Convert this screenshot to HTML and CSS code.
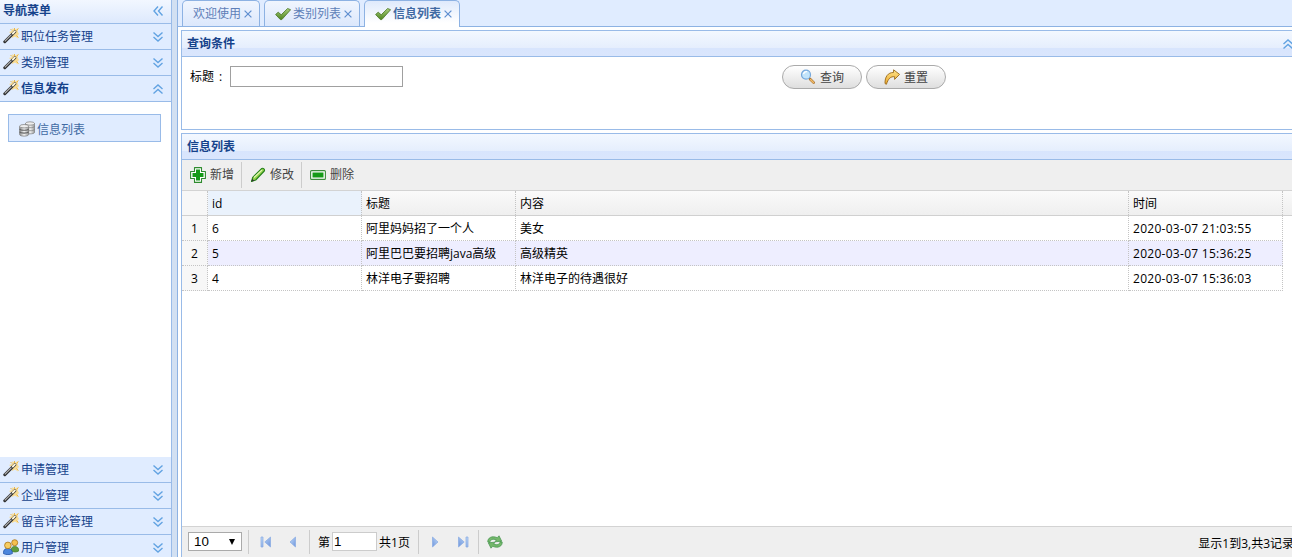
FILE: index.html
```html
<!DOCTYPE html>
<html lang="zh-CN">
<head>
  <meta charset="UTF-8">
  <title>信息列表</title>
  <link rel="stylesheet" href="styles.css">
</head>
<body>
  <!-- shared icons -->
  <svg class="sprite">
    <defs>
      <linearGradient id="g-check" x1="0" y1="0" x2="0" y2="1"><stop offset="0" stop-color="#a9cf7c"/><stop offset="1" stop-color="#4c8420"/></linearGradient>
      <linearGradient id="g-arrow" x1="0" y1="0" x2="0" y2="1"><stop offset="0" stop-color="#ffe58a"/><stop offset="1" stop-color="#eba72c"/></linearGradient>
      <linearGradient id="g-page" x1="0" y1="0" x2="1" y2="1"><stop offset="0" stop-color="#c3dcf8"/><stop offset="1" stop-color="#6d94dc"/></linearGradient>
      <linearGradient id="g-db" x1="0" y1="0" x2="1" y2="0"><stop offset="0" stop-color="#8a8a8a"/><stop offset=".5" stop-color="#f4f4f4"/><stop offset="1" stop-color="#9a9a9a"/></linearGradient>
    </defs>
    <symbol id="wand" viewBox="0 0 16 16">
      <path d="M9.500 0l2 1.800L15.200 0l-.5 3.500L16 6l-1.500 1.500.5 3-3-2L9 10 8.500 6 6 4l3-1z" fill="#f9dc93"/>
      <path d="M7.500 1l1.500 1.500M15.500.5l-2 2M15.500 9.500L13.500 7.500M11.500 0v2" stroke="#e8b850"/>
      <path d="M1.800 13.700L11.800 3.700" stroke="#2e2e2e" stroke-width="3" stroke-linecap="round"/>
      <path d="M1.800 13.300L8.500 6.600" stroke="#b5b5b5" stroke-width="1.200"/>
      <path d="M9.800 5.500l2.100-2.100" stroke="#fff7dc" stroke-width="1.900" stroke-linecap="round"/>
    </symbol>
    <symbol id="users" viewBox="0 0 16 16">
      <path d="M8 12c0-3 1-4.500 3.700-4.500S16 9 15.700 12c-2 1.300-5 1.300-7.700 0z" fill="#5f9d3c" stroke="#3f7a25" stroke-width=".7"/>
      <circle cx="11.700" cy="3.700" r="3" fill="#f4c04f" stroke="#a87318" stroke-width=".8"/>
      <path d="M.4 14.500c0-3.700 1.500-5 4.500-5s4.500 1.500 4.500 5c-2.500 1.500-6.500 1.500-9 0z" fill="#4b86dd" stroke="#2353a5" stroke-width=".8"/>
      <circle cx="4.900" cy="6.400" r="3.300" fill="#f7cd62" stroke="#a87318" stroke-width=".8"/>
    </symbol>
    <symbol id="database" viewBox="0 0 16 16">
      <g stroke="#7b7b7b" stroke-width=".7" fill="url(#g-db)">
        <path d="M6.500 2.500v9c0 1.800 9 1.800 9 0v-9z"/>
        <ellipse cx="11" cy="2.500" rx="4.500" ry="1.700" fill="#eee"/>
        <path d="M6.500 5.500c1 1.600 8 1.600 9 0M6.500 8.500c1 1.600 8 1.600 9 0" fill="none"/>
        <path d="M.6 5.500v8c0 2.200 9 2.200 9 0v-8z"/>
        <path d="M.6 8c1 1.700 8 1.700 9 0M.6 10.800c1 1.700 8 1.700 9 0" fill="none" stroke="#666" stroke-width="1.100"/>
        <ellipse cx="5.100" cy="5.200" rx="4.500" ry="1.700" fill="#eee"/>
      </g>
    </symbol>
    <symbol id="chevrons" viewBox="0 0 16 16">
      <path d="M3.500 3.500L8 7.500l4.500-4M3.500 8L8 12l4.500-4" fill="none" stroke="#62a3e2" stroke-width="1.400"/>
    </symbol>
    <symbol id="check" viewBox="0 0 16 16">
      <path d="M.6 8.500l2.600-2.300 3 2.600L12.600 2.500l3 1.200L6.800 13.600H5.400z" fill="url(#g-check)" stroke="#45741f" stroke-width=".8" stroke-linejoin="round"/>
    </symbol>
    <symbol id="close" viewBox="0 0 8 8">
      <path d="M.6.6l6.800 6.800M7.400.6L.6 7.400" fill="none" stroke="#5f8fd0" stroke-width="1.200"/>
    </symbol>
    <symbol id="search" viewBox="0 0 16 16">
      <path d="M10 10l3.700 3.700" stroke="#a66f2d" stroke-width="2.600" stroke-linecap="round"/>
      <path d="M10.500 10.500l3 3" stroke="#f1bc6a" stroke-width="1.500" stroke-linecap="round"/>
      <circle cx="6" cy="5.700" r="4.500" fill="#c2e4fb" stroke="#75a8dc" stroke-width="1.200"/>
      <path d="M3.500 5.200c.5-1.800 1.800-2.700 3.500-2.500" fill="none" stroke="#fff" stroke-width="1.300"/>
    </symbol>
    <symbol id="redo" viewBox="0 0 16 16">
      <path d="M9.600.8l6 4.600-5 5V7.700C6.500 7.400 4.400 9.500 2.400 15.300L1 14.500C.8 7.800 4 3.400 9.500 3.500z" fill="url(#g-arrow)" stroke="#9a6a1c" stroke-width=".9" stroke-linejoin="round"/>
    </symbol>
    <symbol id="add" viewBox="0 0 16 16">
      <path d="M4.500.6h7v3.900h3.900v7h-3.900v3.900h-7v-3.900H.6v-7h3.900z" fill="#fff" stroke="#2f8b2f" stroke-width="1.100" stroke-linejoin="round"/>
      <path d="M6 2.500h4V6h3.500v4H10v3.500H6V10H2.500V6H6z" fill="#159a18"/>
    </symbol>
    <symbol id="pencil" viewBox="0 0 16 16">
      <path d="M1.500 14.500l1.200-4.200L11.800 1.500c1.500-.8 3.300 1 2.500 2.500L5.700 13z" fill="#93d34a" stroke="#26821c" stroke-width="1.100" stroke-linejoin="round"/>
      <path d="M4 10.500L12 3" stroke="#e3f8b5" stroke-width="1.100"/>
      <path d="M1.500 14.500l.8-2.700 2 1.900z" fill="#333"/>
    </symbol>
    <symbol id="remove" viewBox="0 0 16 16">
      <rect x=".6" y="3.600" width="14.800" height="8.800" rx="1" fill="#fff" stroke="#3b8c3b" stroke-width="1.100"/>
      <path d="M2.500 5.500h11v5h-11z" fill="#159a18"/>
    </symbol>
    <symbol id="prev" viewBox="0 0 16 16"><path d="M10.500 3v10L5 8z" fill="url(#g-page)" stroke="#88aae3" stroke-width=".7"/></symbol>
    <symbol id="first" viewBox="0 0 16 16"><path d="M3 3h2v10H3zM12.500 3v10L6.800 8z" fill="url(#g-page)" stroke="#88aae3" stroke-width=".7"/></symbol>
    <symbol id="refresh" viewBox="0 0 16 16">
      <path d="M.8 8C.5 3.800 5 1.300 10.300 3.700L12 1.800l2.700 5.400-6.700.6 1.300-1.900C6 4.600 3.500 5.200 2.800 8.500z" fill="#74b86b" stroke="#41904a" stroke-width=".7"/>
      <path d="M15.200 8c.3 4.200-4.200 6.700-9.500 4.300L4 14.200 1.300 8.800l6.700-.6-1.300 1.900c3.300 1.300 5.800.7 6.500-2.600z" fill="#74b86b" stroke="#41904a" stroke-width=".7"/>
    </symbol>
  </svg>

  <div class="layout">
    <aside class="sidebar">
      <div class="sidebar-title">导航菜单<svg class="tool tool-left"><use href="#chevrons"/></svg></div>
      <div class="menu-header"><svg class="icon"><use href="#wand"/></svg><span>职位任务管理</span><svg class="tool"><use href="#chevrons"/></svg></div>
      <div class="menu-header"><svg class="icon"><use href="#wand"/></svg><span>类别管理</span><svg class="tool"><use href="#chevrons"/></svg></div>
      <div class="menu-header menu-open"><svg class="icon"><use href="#wand"/></svg><span>信息发布</span><svg class="tool tool-up"><use href="#chevrons"/></svg></div>
      <div class="menu-body">
        <div class="menu-item"><svg class="icon"><use href="#database"/></svg><span>信息列表</span></div>
      </div>
      <div class="menu-header"><svg class="icon"><use href="#wand"/></svg><span>申请管理</span><svg class="tool"><use href="#chevrons"/></svg></div>
      <div class="menu-header"><svg class="icon"><use href="#wand"/></svg><span>企业管理</span><svg class="tool"><use href="#chevrons"/></svg></div>
      <div class="menu-header"><svg class="icon"><use href="#wand"/></svg><span>留言评论管理</span><svg class="tool"><use href="#chevrons"/></svg></div>
      <div class="menu-header"><svg class="icon"><use href="#users"/></svg><span>用户管理</span><svg class="tool"><use href="#chevrons"/></svg></div>
    </aside>

    <main class="center">
      <div class="tabs">
        <div class="tab"><span>欢迎使用</span><svg class="tab-close"><use href="#close"/></svg></div>
        <div class="tab tab-icon"><svg class="icon"><use href="#check"/></svg><span>类别列表</span><svg class="tab-close"><use href="#close"/></svg></div>
        <div class="tab tab-icon tab-selected"><svg class="icon"><use href="#check"/></svg><span>信息列表</span><svg class="tab-close"><use href="#close"/></svg></div>
      </div>

      <div class="tab-body">
        <section class="panel search-panel">
          <div class="panel-header">查询条件<svg class="tool tool-up"><use href="#chevrons"/></svg></div>
          <div class="search-form">
            <label for="title">标题<span class="colon">:</span></label>
            <input type="text" id="title">
            <div class="search-buttons">
              <button class="button"><svg class="icon"><use href="#search"/></svg><span>查询</span></button>
              <button class="button"><svg class="icon"><use href="#redo"/></svg><span>重置</span></button>
            </div>
          </div>
        </section>

        <section class="panel grid-panel">
          <div class="panel-header">信息列表</div>
          <div class="toolbar">
            <a class="tool-button"><svg class="icon"><use href="#add"/></svg>新增</a>
            <a class="tool-button"><svg class="icon"><use href="#pencil"/></svg>修改</a>
            <a class="tool-button"><svg class="icon"><use href="#remove"/></svg>删除</a>
          </div>
          <div class="grid">
            <div class="row grid-head"><div class="num"></div><div class="hover">id</div><div>标题</div><div>内容</div><div>时间</div></div>
            <div class="row"><div class="num">1</div><div>6</div><div>阿里妈妈招了一个人</div><div>美女</div><div class="date">2020-03-07 21:03:55</div></div>
            <div class="row alt"><div class="num">2</div><div>5</div><div>阿里巴巴要招聘java高级</div><div>高级精英</div><div class="date">2020-03-07 15:36:25</div></div>
            <div class="row"><div class="num">3</div><div>4</div><div>林洋电子要招聘</div><div>林洋电子的待遇很好</div><div class="date">2020-03-07 15:36:03</div></div>
          </div>
          <div class="pager">
            <div class="page-size">10<span class="caret"></span></div>
            <div class="pager-group first-group"><svg class="icon"><use href="#first"/></svg><svg class="icon"><use href="#prev"/></svg></div>
            <div class="pager-group page-group"><span>第</span><input type="text" class="page-num" value="1"><span>共1页</span></div>
            <div class="pager-group next-group"><svg class="icon flip"><use href="#prev"/></svg><svg class="icon flip"><use href="#first"/></svg></div>
            <div class="pager-group"><svg class="icon"><use href="#refresh"/></svg></div>
            <div class="page-info">显示1到3,共3记录</div>
          </div>
        </section>
      </div>
    </main>
  </div>
</body>
</html>
```
FILE: styles.css
```css
* {
  box-sizing: border-box;
}

body {
  margin: 0;
  height: 557px;
  overflow: hidden;
  background: #d2e0f2;
  color: #000;
  font-family: "Open Sans", "Noto Sans CJK SC", sans-serif;
  font-size: 12px;
  line-height: 16px;
}

.sprite {
  display: block;
  width: 0;
  height: 0;
}

.icon,
.tool {
  width: 16px;
  height: 16px;
  flex: none;
}

.layout {
  display: flex;
  gap: 5px;
  height: 100%;
}

/* left navigation */
.sidebar {
  display: flex;
  flex-direction: column;
  flex: none;
  width: 172px;
  border-right: 1px solid #99bbe8;
  background: #fff;
}

.sidebar-title,
.menu-header {
  display: flex;
  align-items: center;
  flex: none;
  height: 26px;
  padding: 0 5px 0 3px;
  border-bottom: 1px solid #99bbe8;
  background: #e0ecff;
  color: #15428b;
}

.menu-header .icon {
  margin-bottom: 2px;
}

.sidebar-title {
  height: 24px;
  padding-bottom: 2px;
  background: linear-gradient(#f2f7ff, #dde9fd);
  font-weight: bold;
}

.menu-header span {
  padding-left: 2px;
}

.menu-open {
  font-weight: bold;
}

.tool {
  margin-left: auto;
}

.tool-left {
  transform: rotate(90deg);
}

.tool-up {
  transform: rotate(180deg);
}

.menu-body {
  flex: none;
  height: 355px;
  padding: 12px 10px 0 8px;
}

.menu-item {
  display: flex;
  align-items: center;
  height: 28px;
  padding: 2px 0 0 10px;
  border: 1px solid #99bbe8;
  background: #e0ecff;
  color: #416aa3;
}

.menu-item span {
  padding: 2px 0 0 2px;
}

/* center */
.center {
  display: flex;
  flex-direction: column;
  flex: none;
  width: 1125px;
  border-left: 1px solid #8db2e3;
  background: #fff;
}

.tabs {
  display: flex;
  align-items: flex-end;
  gap: 4px;
  flex: none;
  height: 27px;
  padding-left: 4px;
  border-bottom: 1px solid #8db2e3;
  background: #e0ecff;
}

.tab {
  display: flex;
  align-items: center;
  width: 78px;
  height: 26px;
  padding-left: 10px;
  border: 1px solid #8db2e3;
  border-bottom: none;
  border-radius: 5px 5px 0 0;
  background: linear-gradient(#f0f5fe, #dce8fc);
  color: #5e7fb8;
}

.tab span {
  padding-top: 1px;
}

.tab-icon {
  width: 96px;
}

.tab-icon span {
  padding-left: 2px;
}

.tab-selected {
  height: 27px;
  margin-bottom: -1px;
  padding-bottom: 1px;
  background: linear-gradient(#dfeafc, #fff 85%);
  color: #416aa3;
  font-weight: bold;
}

.tab-close {
  width: 8px;
  height: 8px;
  margin: 1px 0 0 3px;
  flex: none;
}

.tab-body {
  display: flex;
  flex-direction: column;
  flex: 1;
  gap: 3px;
  padding: 3px 3px 0;
}

.panel {
  border: 1px solid #99bbe8;
  background: #fff;
}

.panel-header {
  display: flex;
  align-items: center;
  height: 26px;
  padding-left: 5px;
  border-bottom: 1px solid #99bbe8;
  background: linear-gradient(#f3f8ff, #e5eefd 68%, #d8e5fd 70%, #dae6fd);
  color: #15428b;
  font-weight: bold;
}

.panel-header .tool {
  margin-right: 2px;
}

.search-panel {
  flex: none;
  height: 100px;
}

.search-form {
  display: flex;
  align-items: flex-start;
  padding: 8px 0 0 8px;
}

.search-form label {
  width: 40px;
  padding-top: 4px;
}

.colon {
  padding-left: 5px;
}

.search-form input {
  width: 173px;
  height: 21px;
  margin-top: 1px;
  border: 1px solid #a0a0a0;
}

.search-buttons {
  display: flex;
  gap: 4px;
  margin-left: 379px;
}

.button {
  display: flex;
  align-items: center;
  gap: 4px;
  width: 80px;
  height: 24px;
  padding: 0 0 0 17px;
  border: 1px solid #aaa;
  border-radius: 12px;
  background: linear-gradient(#fff, #dedede);
  color: #444;
  font: inherit;
}

.button span {
  padding-top: 2px;
}

/* data grid */
.grid-panel {
  display: flex;
  flex-direction: column;
  flex: 1;
  border-bottom: none;
}

.toolbar {
  display: flex;
  flex: none;
  height: 31px;
  padding: 2px 0;
  border-bottom: 1px solid #d3d3d3;
  background: #efefef;
  color: #444;
}

.tool-button {
  display: flex;
  align-items: center;
  gap: 4px;
  width: 60px;
  padding: 0 0 1px 8px;
}

.tool-button:not(:last-child) {
  border-right: 1px solid #ccc;
}

.grid {
  flex: 1;
}

.row {
  display: grid;
  grid-template-columns: 26px 154px 154px 613px 154px;
  height: 25px;
}

.row > div {
  padding: 5px 4px 0;
  border: dotted #c4c4c4;
  border-width: 0 1px 1px 0;
}

.row > .num {
  padding: 5px 0 0;
  background: #f7f7f7;
  text-align: center;
}

.grid-head {
  border-bottom: 1px solid #d0d0d0;
  background: linear-gradient(#fafafa, #efefef);
}

.grid-head > div {
  border-bottom: none;
}

.grid-head > .hover {
  background: #eaf2fc;
}

.alt > div:not(.num) {
  background: #eeeeff;
}

.row > .date {
  letter-spacing: 0.28px;
}

/* pager */
.pager {
  display: flex;
  align-items: center;
  flex: none;
  height: 31px;
  padding-left: 6px;
  border-top: 1px solid #d3d3d3;
  background: #efefef;
}

.page-size {
  display: flex;
  align-items: center;
  justify-content: space-between;
  width: 54px;
  height: 19px;
  margin: 0 6px 1px 0;
  padding: 0 6px 0 5px;
  border: 1px solid #aaa;
  background: #fff;
  font: 13.33px "Liberation Sans", sans-serif;
}

.caret {
  border: 3px solid transparent;
  border-top: 6px solid #000;
  border-bottom: none;
}

.pager-group {
  display: flex;
  align-items: center;
  height: 24px;
  padding-left: 8px;
  border-left: 1px solid #ccc;
}

.first-group {
  gap: 11px;
  width: 61px;
  padding-left: 9px;
}

.page-group {
  width: 109px;
}

.page-group span {
  padding-top: 2px;
}

.page-num {
  width: 45px;
  height: 19px;
  margin: 0 2px 1px 2px;
  padding: 0 1px;
  border: 1px solid #ccc;
  font: 13.33px "Liberation Sans", sans-serif;
}

.next-group {
  gap: 12px;
  width: 60px;
}

.flip {
  transform: scaleX(-1);
}

.page-info {
  margin-left: auto;
  padding: 3px 4px 0 0;
  white-space: nowrap;
}
```
